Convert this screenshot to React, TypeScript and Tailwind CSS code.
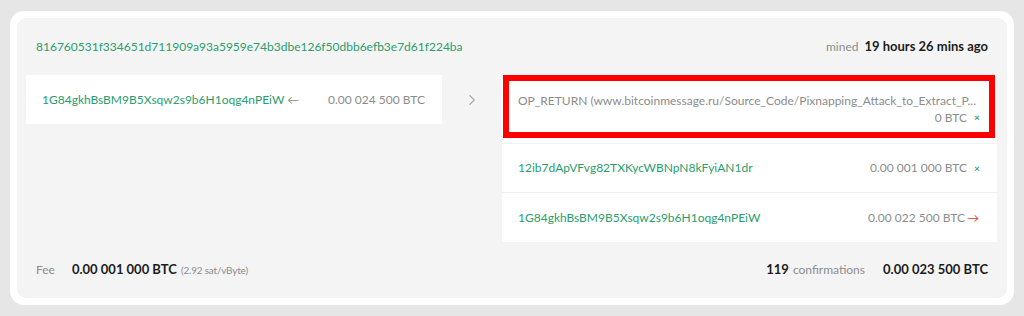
import { ChevronRight } from "lucide-react"

const font = { fontFamily: "Lato, 'Liberation Sans', sans-serif" }

function OutRow({
  address,
  amount,
  mark,
}: {
  address: string
  amount: string
  mark: "x" | "out"
}) {
  return (
    <div className="flex items-center justify-between h-[49px] pl-4 pr-[18px] border-b border-[#f0f0f0] last:border-b-0">
      <span className="text-[#2a9d6e]">{address}</span>
      <span className="flex items-center text-[#8c8c8c]">
        {amount}
        {mark === "x" ? (
          <span className="ml-[7px] text-[10px] font-bold text-[#3aa576] w-[5px]">×</span>
        ) : (
          <span className="ml-[2px] text-[#e53935]">→</span>
        )}
      </span>
    </div>
  )
}

export default function App() {
  return (
    <div className="w-[1024px] h-[316px] bg-[#e6e6e6] pt-[11px] px-[10px] text-[12px]" style={font}>
      <div className="bg-white rounded-[14px] p-[7px]">
        <div className="bg-[#f4f4f4] rounded-[9px] px-[9px]">
          {/* header */}
          <div className="flex items-center justify-between h-[57px] px-[10px]">
            <span className="text-[#2a9d6e]">
              816760531f334651d711909a93a5959e74b3dbe126f50dbb6efb3e7d61f224ba
            </span>
            <span>
              <span className="text-[#8c8c8c]">mined</span>
              <span className="ml-[6px] font-bold text-[13px] text-[#1c1c1c]">19 hours 26 mins ago</span>
            </span>
          </div>

          {/* inputs / outputs */}
          <div className="flex items-start">
            <div className="w-[416px] bg-white h-[49px] flex items-center justify-between pl-4 pr-[17px]">
              <span className="text-[#2a9d6e]">
                1G84gkhBsBM9B5Xsqw2s9b6H1oqg4nPEiW <span className="text-[#8c8c8c]">←</span>
              </span>
              <span className="text-[#8c8c8c]">0.00 024 500 BTC</span>
            </div>
            <div className="w-[60px] h-[49px] flex items-center justify-center">
              <ChevronRight className="w-[18px] h-[18px] text-[#a8a8a8]" strokeWidth={1.5} />
            </div>
            <div className="w-[495px] bg-white">
              <div className="border-b border-[#f0f0f0] pb-[5px]">
                <div className="ml-px mr-[2px] border-[6px] border-[#ff0000] pt-[11px] pb-[6px] pl-[9px] pr-[10px] leading-[17px]">
                  <div className="text-[#8c8c8c] truncate">
                    OP_RETURN (www.bitcoinmessage.ru/Source_Code/Pixnapping_Attack_to_Extract_P...
                  </div>
                  <div className="flex justify-end items-center text-[#8c8c8c]">
                    0 BTC
                    <span className="ml-[7px] text-[10px] font-bold text-[#3aa576] w-[5px]">×</span>
                  </div>
                </div>
              </div>
              <OutRow address="12ib7dApVFvg82TXKycWBNpN8kFyiAN1dr" amount="0.00 001 000 BTC" mark="x" />
              <OutRow address="1G84gkhBsBM9B5Xsqw2s9b6H1oqg4nPEiW" amount="0.00 022 500 BTC" mark="out" />
            </div>
          </div>

          {/* footer */}
          <div className="flex items-center justify-between h-[56px] px-[10px]">
            <span className="flex items-baseline">
              <span className="text-[#8c8c8c]">Fee</span>
              <span className="ml-[17px] font-bold text-[13px] text-[#1c1c1c]">0.00 001 000 BTC</span>
              <span className="ml-[4px] text-[10px] tracking-[-0.2px] text-[#8c8c8c]">(2.92 sat/vByte)</span>
            </span>
            <span className="flex items-baseline">
              <span className="font-bold text-[13px] text-[#1c1c1c]">119</span>
              <span className="ml-[4px] text-[#8c8c8c]">confirmations</span>
              <span className="ml-[18px] font-bold text-[13px] text-[#1c1c1c]">0.00 023 500 BTC</span>
            </span>
          </div>
        </div>
      </div>
    </div>
  )
}
